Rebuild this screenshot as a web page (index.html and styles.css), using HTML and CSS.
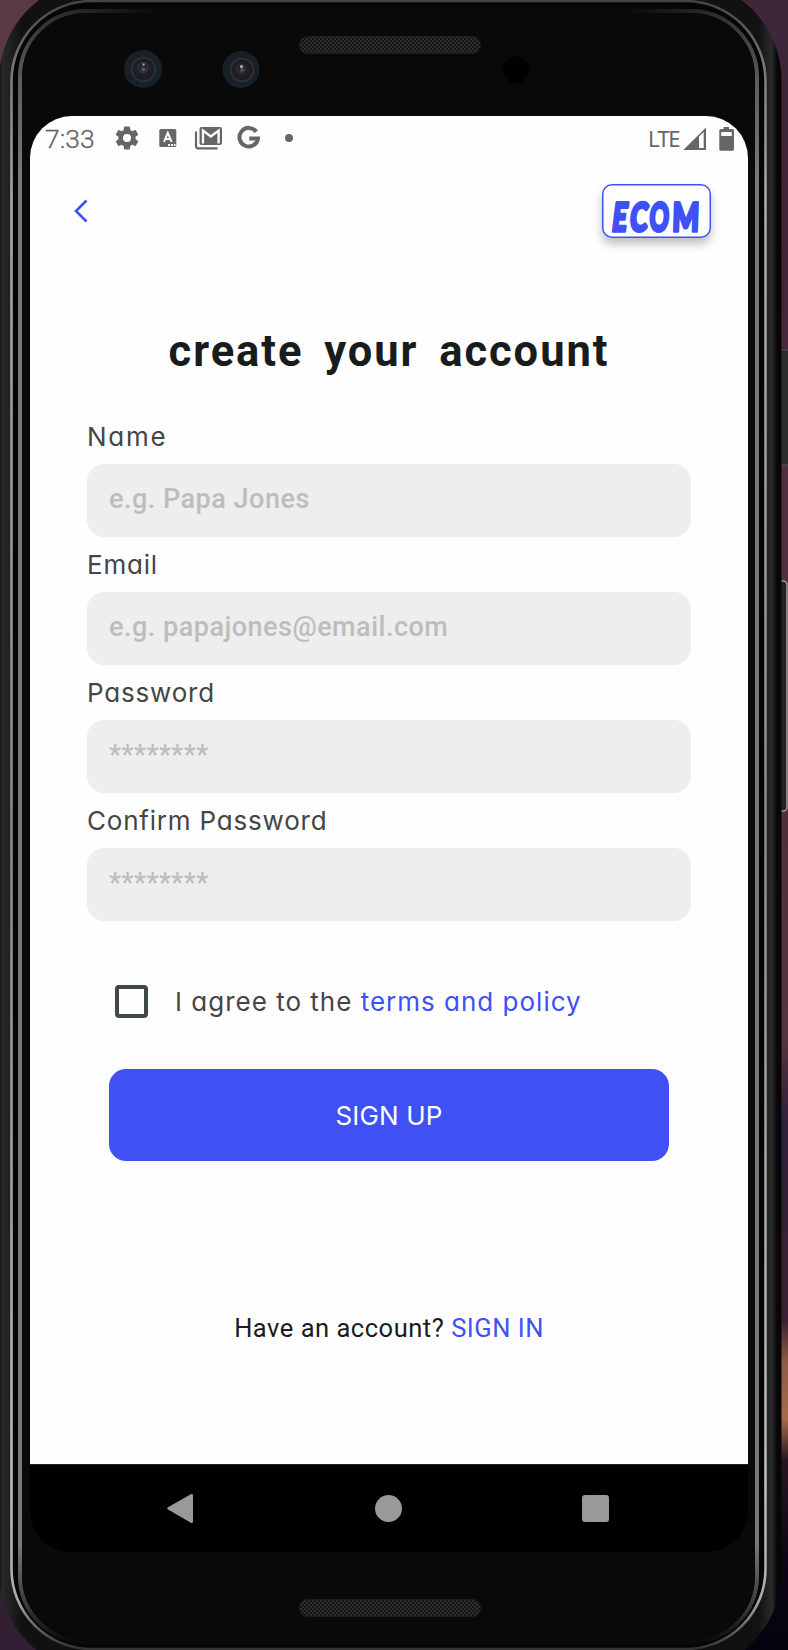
FILE: index.html
```html
<!DOCTYPE html>
<html lang="en">
<head>
<meta charset="utf-8">
<title>Create your account</title>
<link rel="stylesheet" href="styles.css">
</head>
<body>
<div class="stage">
  <svg class="device" viewBox="0 0 788 1650" aria-hidden="true">
    <defs>
      <linearGradient id="wall" x1="0" y1="0" x2="0" y2="1">
        <stop offset="0" stop-color="#3f263b"/><stop offset=".17" stop-color="#412539"/>
        <stop offset=".28" stop-color="#50303e"/><stop offset=".5" stop-color="#502f3c"/>
        <stop offset=".63" stop-color="#55343f"/><stop offset=".68" stop-color="#30203a"/>
        <stop offset=".8" stop-color="#3a2132"/><stop offset=".825" stop-color="#8d5a43"/>
        <stop offset=".86" stop-color="#a56b47"/><stop offset=".885" stop-color="#271620"/>
        <stop offset=".95" stop-color="#0a0414"/><stop offset="1" stop-color="#06020e"/>
      </linearGradient>
      <linearGradient id="edge" x1="0" x2="1">
        <stop offset="0" stop-color="#0a0a0a"/><stop offset=".004" stop-color="#292929"/>
        <stop offset=".012" stop-color="#222"/><stop offset=".03" stop-color="#111"/>
        <stop offset=".97" stop-color="#111"/><stop offset=".988" stop-color="#2a2a2a"/>
        <stop offset=".994" stop-color="#080808"/><stop offset="1" stop-color="#050505"/>
      </linearGradient>
      <linearGradient id="rimOuter" x1="0" y1="0" x2="0" y2="1">
        <stop offset="0" stop-color="#444"/><stop offset=".04" stop-color="#777"/>
        <stop offset=".12" stop-color="#aaa"/><stop offset=".5" stop-color="#888"/>
        <stop offset=".9" stop-color="#bbb"/><stop offset=".97" stop-color="#aaa"/><stop offset="1" stop-color="#333"/>
      </linearGradient>
      <linearGradient id="rimInner" x1="0" y1="0" x2="0" y2="1">
        <stop offset="0" stop-color="#2a2a2e"/><stop offset=".04" stop-color="#5a5a63"/>
        <stop offset=".1" stop-color="#77777d"/><stop offset=".94" stop-color="#77777d"/>
        <stop offset=".98" stop-color="#34343c"/><stop offset="1" stop-color="#0a0a0a"/>
      </linearGradient>
      <linearGradient id="fade" x1="0" x2="1">
        <stop offset="0" stop-color="#090909" stop-opacity="0"/><stop offset=".13" stop-color="#090909"/>
        <stop offset=".87" stop-color="#090909"/><stop offset="1" stop-color="#090909" stop-opacity="0"/>
      </linearGradient>
      <radialGradient id="lens">
        <stop offset="0" stop-color="#667"/><stop offset=".25" stop-color="#222230"/>
        <stop offset=".8" stop-color="#1d1d1f"/><stop offset="1" stop-color="#3a3a3c"/>
      </radialGradient>
      <pattern id="mesh" width="4" height="4" patternUnits="userSpaceOnUse">
        <rect width="4" height="4" fill="#151515"/>
        <circle cx="1" cy="1" r=".9" fill="#3a3a3a"/><circle cx="3" cy="3" r=".9" fill="#3a3a3a"/>
      </pattern>
    </defs>
    <rect width="788" height="1650" fill="url(#wall)"/>
    <rect width="60" height="90" fill="#5b3845"/>
    <rect y="1570" width="60" height="80" fill="#321f34"/>
    <rect x="778" y="350" width="12" height="115" rx="3" fill="#2b2c2c" stroke="#555" />
    <rect x="778" y="581" width="9" height="230" rx="4" fill="#222" stroke="#999" stroke-width="1.6"/>
    <rect x="-1" y="-20" width="782.5" height="1692" rx="100" fill="url(#edge)"/>
    <rect x="11.500" y="1" width="754" height="1648" rx="80" fill="#050505" stroke="url(#rimOuter)" stroke-width="2.600"/>
    <rect x="20" y="11" width="737" height="1631" rx="66" fill="#090909" stroke="url(#rimInner)" stroke-width="4"/>
    <rect x="22" y="13" width="733" height="1627" rx="64" fill="#090909"/>
    <rect x="74" y="7" width="636" height="7" fill="url(#fade)"/>
    <rect x="74" y="1638" width="636" height="7" fill="url(#fade)"/>
    <g>
      <circle cx="143" cy="69" r="19" fill="#182127"/><circle cx="143.500" cy="69.500" r="12.500" fill="url(#lens)"/>
      <circle cx="143" cy="67.500" r="5" fill="none" stroke="#3b3b4c"/><circle cx="143.500" cy="64.500" r="1.300" fill="#9a90a8"/>
      <circle cx="241" cy="69.500" r="18.500" fill="#182127"/><circle cx="242" cy="70" r="12" fill="url(#lens)"/>
      <circle cx="241" cy="69" r="4.500" fill="none" stroke="#33383d"/><circle cx="241.500" cy="66.500" r="1.600" fill="#aab"/>
      <circle cx="516" cy="69.500" r="13.500" fill="#020003"/>
    </g>
    <rect x="299.500" y="36.500" width="181" height="17" rx="8" fill="url(#mesh)" stroke="#1c1c1c"/>
    <rect x="299.500" y="1599.500" width="181" height="17" rx="8" fill="url(#mesh)" stroke="#1c1c1c"/>
  </svg>

  <main class="screen">
    <header class="status">
      <span class="clock">7:33</span>
      <svg class="status-icons" width="190" height="30" viewBox="104 124 190 30" fill="#666">
        <path transform="translate(113.200 124.200) scale(1.150)" d="M19.430 12.980c.04-.32.070-.64.070-.98s-.03-.66-.07-.98l2.110-1.650c.19-.15.240-.42.120-.64l-2-3.460c-.12-.22-.39-.3-.61-.22l-2.490 1c-.52-.4-1.080-.73-1.690-.98l-.38-2.650C14.460 2.180 14.250 2 14 2h-4c-.25 0-.46.180-.49.420l-.38 2.650c-.61.250-1.170.59-1.690.98l-2.490-1c-.23-.09-.49 0-.61.220l-2 3.460c-.13.220-.07.490.120.640l2.110 1.650c-.04.320-.07.650-.07.980s.03.660.070.980l-2.110 1.650c-.19.150-.24.420-.12.640l2 3.460c.12.220.39.300.61.220l2.490-1c.52.400 1.080.73 1.690.98l.38 2.650c.03.240.24.420.49.420h4c.25 0 .46-.18.490-.42l.38-2.650c.61-.25 1.170-.59 1.690-.98l2.490 1c.23.090.49 0 .61-.22l2-3.460c.12-.22.070-.49-.12-.64zM12 15.500A3.500 3.500 0 1 1 12 8.500a3.500 3.500 0 0 1 0 7z"/>
        <rect x="159.300" y="129" width="17" height="18" rx="1.500"/>
        <path d="M164 141.800l3.800-9 3.800 9M165.400 139h4.800" fill="none" stroke="#fff" stroke-width="1.900"/>
        <path d="M168 144h2v2h-2zM171 144h2v2h-2zM174 144h1.500v2H174z" fill="#fff"/>
        <path d="M196 131.500V146q0 2.300 2.300 2.300H217.500" fill="none" stroke="#666" stroke-width="2.200"/>
        <rect x="199.500" y="127" width="22.500" height="18" rx="2"/>
        <path d="M203 143.500V130.500l7.800 6 7.800-6v13" fill="none" stroke="#fff" stroke-width="2.300"/>
        <path d="M256.300 131.700A9.300 9.300 0 1 0 258 138.400h-8.800" fill="none" stroke="#666" stroke-width="4"/>
        <circle cx="289" cy="138" r="4"/>
      </svg>
      <span class="net">LTE</span>
      <svg class="signal" width="52" height="26" viewBox="683 125 52 26" fill="#666">
        <path fill-rule="evenodd" d="M683.300 149L706 126.500V149zM699 135.500V147h4.700v-15.900z"/>
        <path fill-rule="evenodd" d="M723.500 126h5.500v2h3.500q1.500 0 1.500 1.500v18.700q0 1.500-1.500 1.500h-11.700q-1.500 0-1.500-1.500v-18.700q0-1.500 1.500-1.500h2.700zM721.200 131v4h10.500v-4z"/>
      </svg>
    </header>

    <div class="topbar">
      <svg class="back" width="16" height="26" viewBox="0 0 16 26" fill="none" stroke="#3f51f4" stroke-width="2.600"><path d="M13.500 2.500L3 13l10.500 10.500"/></svg>
      <div class="logo">
        <svg width="109" height="60" viewBox="602 184 109 60">
          <g class="logo-text">
            <text transform="translate(611 230.500) skewX(-7) scale(.66 1)">E</text>
            <text transform="translate(629 230.500) skewX(-6) scale(.68 1)">C</text>
            <text transform="translate(649 230.500) skewX(-3) scale(.61 1)">O</text>
            <text transform="translate(672 230.500) skewX(-2) scale(.72 1)">M</text>
          </g>
        </svg>
      </div>
    </div>

    <h1 class="title">create your account</h1>

    <form class="form">
      <label class="field"><span class="label l1">Name</span><span class="input">e.g. Papa Jones</span></label>
      <label class="field"><span class="label">Email</span><span class="input">e.g. papajones@email.com</span></label>
      <label class="field"><span class="label">Password</span><span class="input">********</span></label>
      <label class="field"><span class="label">Confirm Password</span><span class="input">********</span></label>
    </form>

    <div class="agree"><span class="box"></span><span class="agree-text">I agree to the <a>terms and policy</a></span></div>
    <div class="signup"><span>SIGN UP</span></div>
    <p class="signin">Have an account? <a>SIGN IN</a></p>

    <nav class="nav">
      <svg width="27" height="31" viewBox="0 0 27 31" fill="#999"><path d="M1 14.200L23.800 1.200Q26 .5 26 2.500V28.500Q26 30.500 23.800 29.800L1 16.500Q-.5 15.400 1 14.200z"/></svg>
      <span class="home"></span>
      <span class="recent"></span>
    </nav>
  </main>
</div>
</body>
</html>
```

FILE: styles.css
```css
* { box-sizing: border-box; }
body { margin: 0; background: #090909; font-family: Roboto, sans-serif; }
.stage { position: relative; width: 788px; height: 1650px; padding: 116px 40px 0 30px; overflow: hidden; }
.device { position: absolute; left: 0; top: 0; width: 788px; height: 1650px; }
.screen { position: relative; width: 718px; height: 1436px; border-radius: 42px; background: linear-gradient(#fefefe 1350px, #000 1350px); overflow: hidden; display: flex; flex-direction: column; }

.status { height: 44px; display: flex; align-items: center; padding: 2px 13px 0 15px; color: #666; }
.clock { width: 59px; font-size: 26.500px; font-weight: 300; line-height: 30px; white-space: nowrap; -webkit-text-stroke: .3px #666; }
.status-icons { flex: none; }
.net { margin-left: auto; margin-right: 4px; margin-top: -3px; font: 400 22px/30px "Noto Sans", sans-serif; letter-spacing: -1.500px; }
.signal { flex: none; }

.topbar { height: 78px; margin-top: 24px; padding: 0 37px 0 43px; display: flex; justify-content: space-between; align-items: flex-start; }
.back { margin-top: 14px; }
.logo { width: 109px; height: 54px; border-radius: 10px; background: #fefefe; box-shadow: inset 0 0 0 1.500px #3f51f4, 0 6px 10px rgba(0, 0, 0, .25); }
.logo svg { display: block; }
.logo-text { font: 900 39px Lato, sans-serif; fill: #3f51f4; stroke: #3f51f4; stroke-width: 3.500; stroke-linejoin: round; }

.title { margin: 60px 0 0; height: 60px; text-align: center; font-size: 43.500px; line-height: 60px; font-weight: 700; color: #191c1d; letter-spacing: 1.950px; word-spacing: 8px; white-space: nowrap; }

.form { margin: 39px 57px 0; display: flex; flex-direction: column; }
.field { display: flex; flex-direction: column; height: 128px; }
.label { height: 43px; padding-top: 1px; line-height: 30px; white-space: nowrap; }
.label, .agree-text, .signup { font-family: Inter, sans-serif; font-weight: 400; font-feature-settings: "cv11"; font-size: 26px; color: #454545; letter-spacing: .800px; }
.l1 { letter-spacing: 1.700px; }
.input { height: 73px; border-radius: 17px; background: #eee; padding: 0 22px; font-size: 27px; line-height: 71px; font-weight: 500; color: #bdbdbd; letter-spacing: .500px; }

.agree { margin: 35px 0 0 85px; height: 66px; display: flex; align-items: center; }
.box { width: 33px; height: 33px; border: 4px solid #3f484a; border-radius: 4px; margin-right: 27px; }
.agree-text { white-space: nowrap; letter-spacing: 1px; }
a { color: #3f51f4; }
.signup { margin: 35px 79px 0; height: 92px; border-radius: 17px; background: #3f51f4; color: #fff; display: flex; align-items: center; justify-content: center; letter-spacing: .150px; }
.signin { margin: 147px 0 0; height: 40px; line-height: 40px; text-align: center; font-size: 25.500px; color: #191c1d; letter-spacing: .520px; white-space: nowrap; }

.nav { margin-top: auto; height: 88px; background: #000; border-top: 1px solid #222; padding: 0 139px 0 137px; display: flex; align-items: center; justify-content: space-between; }
.home { width: 27px; height: 27px; border-radius: 50%; background: #999; }
.recent { width: 27px; height: 27px; border-radius: 3px; background: #999; }
```
